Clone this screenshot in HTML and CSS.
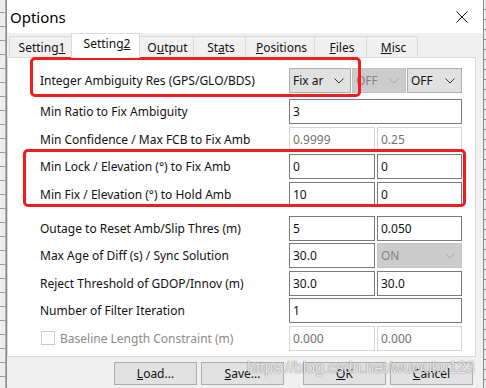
FILE: index.html
```html
<!DOCTYPE html>
<html>
<head>
<meta charset="utf-8">
<title>Options</title>
<link rel="stylesheet" href="styles.css">
</head>
<body>
<div class="screen">
  <div class="behind behind-left"></div>
  <div class="window">
    <div class="titlebar">
      <span class="title">Options</span>
      <svg class="close" width="12" height="12" viewBox="0 0 12 12"><path d="M0.5 0.5L11.5 11.5M11.5 0.5L0.5 11.5" stroke="#111" stroke-width="1" fill="none"/></svg>
    </div>
    <div class="client">
      <div class="tabs">
        <div class="tab t1">Setting<u>1</u></div>
        <div class="tab t2 active">Setting<u>2</u></div>
        <div class="tab t3">O<u>u</u>tput</div>
        <div class="tab t4">St<u>a</u>ts</div>
        <div class="tab t5"><u>P</u>ositions</div>
        <div class="tab t6"><u>F</u>iles</div>
        <div class="tab t7"><u>M</u>isc</div>
      </div>
      <div class="panel">
        <div class="row first">
          <span class="label">Integer Ambiguity Res (GPS/GLO/BDS)</span>
          <div class="combos">
            <div class="combo c1"><span>Fix ar</span><svg class="chev" width="10" height="6" viewBox="0 0 10 6"><path d="M0.5 0.5L5 5L9.5 0.5" stroke="#333" fill="none"/></svg></div>
            <div class="combo c2 disabled"><span>OFF</span><svg class="chev" width="10" height="6" viewBox="0 0 10 6"><path d="M0.5 0.5L5 5L9.5 0.5" stroke="#a8a8a8" fill="none"/></svg></div>
            <div class="combo c3"><span>OFF</span><svg class="chev" width="10" height="6" viewBox="0 0 10 6"><path d="M0.5 0.5L5 5L9.5 0.5" stroke="#333" fill="none"/></svg></div>
          </div>
        </div>
        <div class="row second">
          <span class="label">Min Ratio to Fix Ambiguity</span>
          <div class="field wide">3</div>
        </div>
        <div class="row">
          <span class="label">Min Confidence / Max FCB to Fix Amb</span>
          <div class="field disabled">0.9999</div>
          <div class="field disabled">0.25</div>
        </div>
        <div class="row">
          <span class="label">Min Lock / Elevation (°) to Fix Amb</span>
          <div class="field">0</div>
          <div class="field">0</div>
        </div>
        <div class="row">
          <span class="label">Min Fix / Elevation (°) to Hold Amb</span>
          <div class="field">10</div>
          <div class="field">0</div>
        </div>
        <div class="row group">
          <span class="label">Outage to Reset Amb/Slip Thres (m)</span>
          <div class="field">5</div>
          <div class="field">0.050</div>
        </div>
        <div class="row">
          <span class="label">Max Age of Diff (s) / Sync Solution</span>
          <div class="field">30.0</div>
          <div class="combo disabled on"><span>ON</span><svg class="chev" width="10" height="6" viewBox="0 0 10 6"><path d="M0.5 0.5L5 5L9.5 0.5" stroke="#a8a8a8" fill="none"/></svg></div>
        </div>
        <div class="row">
          <span class="label">Reject Threshold of GDOP/Innov (m)</span>
          <div class="field">30.0</div>
          <div class="field">30.0</div>
        </div>
        <div class="row">
          <span class="label">Number of Filter Iteration</span>
          <div class="field wide">1</div>
        </div>
        <div class="row">
          <span class="label check-label"><span class="checkbox"></span><span class="dim">Baseline Length Constraint (m)</span></span>
          <div class="field disabled">0.000</div>
          <div class="field disabled">0.000</div>
        </div>
        <div class="mark mark1"></div>
        <div class="mark mark2"></div>
      </div>
      <div class="buttons">
        <div class="btn"><span><u>L</u>oad...</span></div>
        <div class="btn"><span><u>S</u>ave...</span></div>
        <div class="btn ok"><span><u>O</u>K</span></div>
        <div class="btn"><span><u>C</u>ancel</span></div>
      </div>
    </div>
  </div>
  <div class="behind behind-right"></div>
  <div class="watermark">https://blog.csdn.net/wuwuku123</div>
</div>
</body>
</html>
```

FILE: styles.css
```css
* { box-sizing: border-box; }
html, body { margin: 0; padding: 0; }
body {
  width: 486px;
  height: 388px;
  overflow: hidden;
  background: #e6e6e6;
  font-family: "Noto Sans", "Liberation Sans", sans-serif;
  font-size: 12px;
  color: #111;
}
.screen { display: flex; height: 388px; position: relative; }

.behind { height: 388px; background-color: #ededed; }
.behind-left {
  width: 6px;
  background-image: repeating-linear-gradient(to bottom, transparent 0, transparent 12px, #9a9a9a 12px, #9a9a9a 13px, transparent 13px, transparent 14px);
  border-right: 1px solid #b0b0b0;
}
.behind-right {
  width: 2px;
  background-image: repeating-linear-gradient(to bottom, transparent 0, transparent 9px, #8a8a8a 9px, #8a8a8a 10px);
}

.window {
  width: 478px;
  border-left: 1px solid #8a8a8a;
  border-right: 1px solid #8a8a8a;
  display: flex;
  flex-direction: column;
}

.titlebar {
  height: 33px;
  background: #fff;
  display: flex;
  align-items: center;
  justify-content: space-between;
  padding: 0 15px 0 3px;
}
.title { font-size: 15px; color: #000; }
.close { display: block; margin-top: 1px; }

.client { flex: 1; background: #f0f0f0; display: flex; flex-direction: column; }

.tabs { height: 24px; display: flex; align-items: flex-end; padding-left: 2px; }
.tab {
  height: 21px;
  border: 1px solid #d9d9d9;
  border-bottom: none;
  background: #f0f0f0;
  display: flex;
  align-items: center;
  justify-content: center;
  padding-left: 3px;
  margin-left: -1px;
  white-space: nowrap;
}
.tab.t1 { margin-left: 0; width: 63px; }
.tab.t2 { width: 69px; }
.tab.t3 { width: 56px; }
.tab.t4 { width: 53px; }
.tab.t5 { width: 70px; }
.tab.t6 { width: 53px; }
.tab.t7 { width: 52px; }
.tab.active {
  height: 25px;
  margin-bottom: -1px;
  background: #fff;
  position: relative;
  z-index: 2;
  margin-right: -1px;
  padding-bottom: 5px;
}

.panel {
  position: relative;
  width: 469px;
  height: 300px;
  background: #fff;
  border: 1px solid #d9d9d9;
  padding: 10px 0 0 32px;
  display: flex;
  flex-direction: column;
  gap: 2.5px;
}

.row {
  display: grid;
  grid-template-columns: 247px 86px 85px;
  column-gap: 2px;
  height: 25px;
  align-items: center;
}
.row.second { margin-top: 3.5px; }
.row.group { margin-top: 6.5px; }
.label { white-space: nowrap; }

.combos { grid-column: span 2; display: flex; gap: 1px; height: 25px; }
.combo {
  height: 25px;
  background: #e1e1e1;
  border: 1px solid #adadad;
  display: flex;
  align-items: center;
  justify-content: space-between;
  padding: 0 6px 0 3px;
  white-space: nowrap;
  overflow: hidden;
}
.combo.c1 { width: 62px; }
.combo.c2 { width: 54px; }
.combo.c3 { width: 55px; }
.combo.disabled { background: #cccccc; border-color: #c4c4c4; color: #838383; }
.chev { display: block; flex: none; }

.field {
  height: 25px;
  border: 1px solid #7a7a7a;
  background: #fff;
  padding-left: 3px;
  display: flex;
  align-items: center;
}
.field.wide { grid-column: span 2; }
.field.disabled { border-color: #d4d4d4; color: #707070; }

.check-label { display: flex; align-items: center; gap: 5px; padding-left: 1px; }
.checkbox { width: 14px; height: 14px; border: 1px solid #cccccc; background: #fff; }
.dim { color: #8a8a8a; }

.mark {
  position: absolute;
  border: 3px solid #f21c1c;
  border-radius: 5px;
  pointer-events: none;
}
.mark1 { left: 22px; top: -1px; width: 331px; height: 40px; }
.mark2 { left: 15px; top: 91px; width: 443px; height: 58px; }

.buttons { display: flex; gap: 4px; padding: 5px 0 0 107px; }
.btn {
  width: 83px;
  height: 23px;
  background: #e1e1e1;
  border: 1px solid #adadad;
  display: flex;
  align-items: center;
  justify-content: center;
}
.btn.ok { margin-left: 15px; }

.watermark {
  position: absolute;
  left: 247px;
  top: 359px;
  font-family: "Liberation Sans", Arial, sans-serif;
  font-size: 15.7px;
  color: rgba(255, 255, 255, 0.85);
  text-shadow: 0 0 1px rgba(0, 0, 0, 0.5), 0 0 2px rgba(0, 0, 0, 0.2);
  white-space: nowrap;
  pointer-events: none;
}
```
